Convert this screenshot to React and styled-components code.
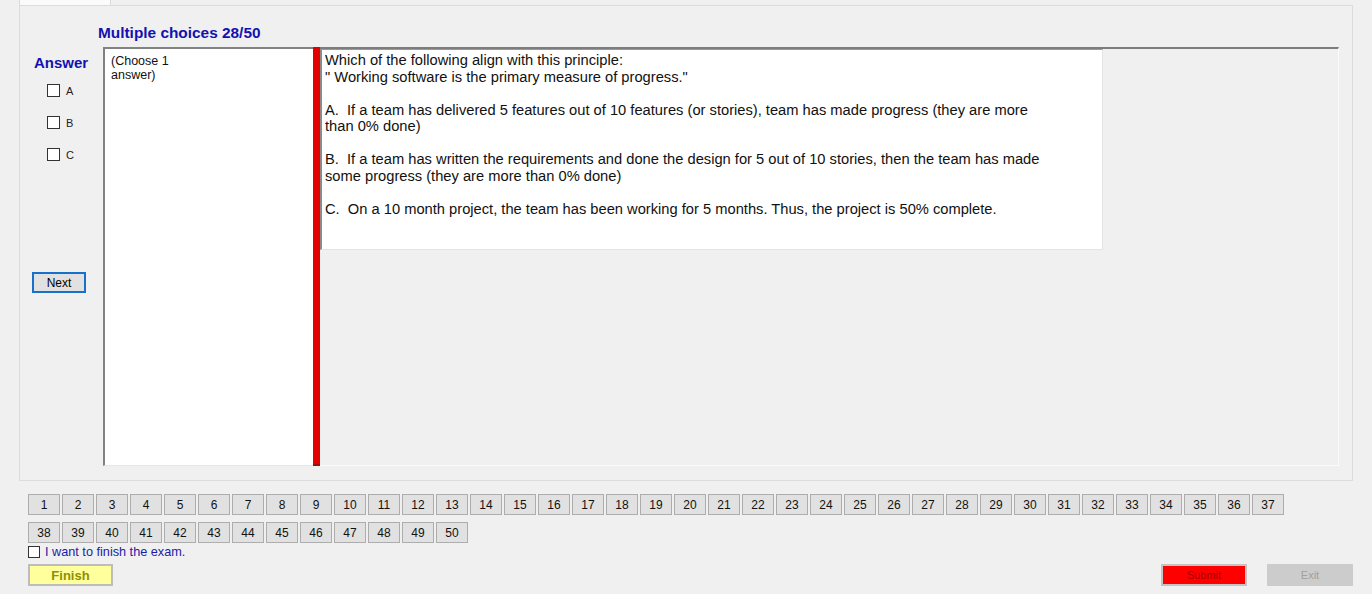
import React from 'react';
import styled, { createGlobalStyle } from 'styled-components';

const GlobalStyle = createGlobalStyle`
    html, body {
        margin: 0;
        padding: 0;
        background: #f0f0f0;
    }
    body {
        font-family: "Liberation Sans", Arial, sans-serif;
        color: #000;
    }
    * { box-sizing: border-box; }
`;

const Window = styled.div`
    width: 1372px;
    height: 594px;
    background: #f0f0f0;
    overflow: hidden;
`;

const TabStrip = styled.div`
    height: 5px;
    display: flex;
`;

const Tab = styled.div`
    margin-left: 19px;
    width: 92px;
    height: 5px;
    background: #fbfbfb;
    border-left: 1px solid #dadada;
    border-right: 1px solid #dadada;
`;

const TabPage = styled.div`
    margin-left: 19px;
    width: 1334px;
    height: 476px;
    border: 1px solid #dcdcdc;
    display: flex;
    flex-direction: column;
`;

const Title = styled.div`
    margin-top: 18px;
    padding-left: 78px;
    font-size: 15.4px;
    line-height: 17px;
    font-weight: bold;
    color: #1212b0;
`;

const Body = styled.div`
    margin-top: 6px;
    width: 1319px;
    height: 419px;
    display: flex;
`;

const AnswerCol = styled.div`
    width: 83px;
    padding-top: 8px;
    display: flex;
    flex-direction: column;
`;

const AnswerTitle = styled.div`
    padding-left: 14px;
    font-size: 15px;
    line-height: 16px;
    font-weight: bold;
    color: #1212b0;
`;

const OptionList = styled.div`
    margin-top: 13px;
    padding-left: 27px;
    display: flex;
    flex-direction: column;
    gap: 19px;
`;

const Option = styled.label`
    display: flex;
    align-items: center;
    gap: 6px;
    height: 13px;
    font-size: 11px;
    color: #222;
`;

const Box = styled.span`
    display: inline-block;
    width: ${p => p.size || 13}px;
    height: ${p => p.size || 13}px;
    background: #fff;
    border: 1px solid #333;
    flex: none;
`;

const NextButton = styled.button`
    margin-top: 111px;
    margin-left: 12px;
    width: 54px;
    height: 21px;
    padding: 0;
    background: #e1e1e1;
    border: 2px solid #1670cc;
    font-family: inherit;
    font-size: 12px;
    color: #000;
`;

const ListBox = styled.div`
    width: 210px;
    height: 100%;
    background: #fff;
    border-top: 2px solid #828282;
    border-left: 2px solid #828282;
    border-bottom: 1px solid #e6e6e6;
    padding: 5px 0 0 6px;
    font-size: 12.5px;
    line-height: 14px;
    color: #111;
`;

const Splitter = styled.div`
    width: 7px;
    height: 100%;
    background: #e30000;
    border-bottom: 2px solid #9a1010;
`;

const RightPanel = styled.div`
    flex: 1;
    height: 100%;
    border-top: 2px solid #7c7c7c;
    border-right: 1px solid #fbfbfb;
    border-bottom: 1px solid #fbfbfb;
`;

const QuestionBox = styled.div`
    width: 783px;
    height: 201px;
    background: #fff;
    border-left: 2px solid #8a8a8a;
    border-top: 1px solid #9a9a9a;
    border-right: 1px solid #e4e4e4;
    border-bottom: 1px solid #e4e4e4;
    padding: 2px 0 0 3px;
    font-size: 14.7px;
    line-height: 16.5px;
    color: #111;
    white-space: pre;
`;

const Para = styled.p`
    margin: 0 0 16.5px 0;
`;

const NavGrid = styled.div`
    margin-top: 13px;
    margin-left: 28px;
    width: 1260px;
    display: flex;
    flex-wrap: wrap;
    gap: 7px 2px;
`;

const NavButton = styled.button`
    width: 32px;
    height: 21px;
    padding: 0;
    background: #e1e1e1;
    border: 1px solid #adadad;
    font-family: inherit;
    font-size: 12px;
    color: #111;
`;

const FinishCheck = styled.label`
    margin-top: 2px;
    margin-left: 28px;
    height: 14px;
    display: flex;
    align-items: center;
    gap: 5px;
    font-size: 12.7px;
    color: #1c1ca8;
`;

const Footer = styled.div`
    margin-top: 5px;
    padding: 0 19px 0 28px;
    display: flex;
    justify-content: space-between;
`;

const ActionGroup = styled.div`
    display: flex;
    gap: 20px;
`;

const ActionButton = styled.button`
    width: ${p => p.w}px;
    height: 22px;
    padding: 0;
    background: ${p => p.bg};
    border: ${p => p.bd};
    font-family: inherit;
    font-size: ${p => p.fs}px;
    font-weight: ${p => (p.bold ? 'bold' : 'normal')};
    color: ${p => p.fg};
`;

const numbers = Array.from({ length: 50 }, (_, i) => i + 1);

export default function App() {
    return (
        <Window>
            <GlobalStyle />
            <TabStrip><Tab /></TabStrip>
            <TabPage>
                <Title>Multiple choices 28/50</Title>
                <Body>
                    <AnswerCol>
                        <AnswerTitle>Answer</AnswerTitle>
                        <OptionList>
                            {['A', 'B', 'C'].map(l => (
                                <Option key={l}><Box />{l}</Option>
                            ))}
                        </OptionList>
                        <NextButton>Next</NextButton>
                    </AnswerCol>
                    <ListBox>(Choose 1<br />answer)</ListBox>
                    <Splitter />
                    <RightPanel>
                        <QuestionBox>
                            <Para>
                                Which of the following align with this principle:{'\n'}
                                " Working software is the primary measure of progress."
                            </Para>
                            <Para>
                                {'A.  If a team has delivered 5 features out of 10 features (or stories), team has made progress (they are more\nthan 0% done)'}
                            </Para>
                            <Para>
                                {'B.  If a team has written the requirements and done the design for 5 out of 10 stories, then the team has made\nsome progress (they are more than 0% done)'}
                            </Para>
                            <Para>
                                {'C.  On a 10 month project, the team has been working for 5 months. Thus, the project is 50% complete.'}
                            </Para>
                        </QuestionBox>
                    </RightPanel>
                </Body>
            </TabPage>
            <NavGrid>
                {numbers.map(n => <NavButton key={n}>{n}</NavButton>)}
            </NavGrid>
            <FinishCheck><Box size={12} />I want to finish the exam.</FinishCheck>
            <Footer>
                <ActionButton w={85} bg="#ffff9c" bd="2px solid #bdbdbd" fs={13} bold fg="#8f8f00">Finish</ActionButton>
                <ActionGroup>
                    <ActionButton w={86} bg="#ff0000" bd="2px solid #c4c4c4" fs={11} fg="#a00000">Submit</ActionButton>
                    <ActionButton w={86} bg="#cccccc" bd="1px solid #cccccc" fs={11} fg="#a0a0a0">Exit</ActionButton>
                </ActionGroup>
            </Footer>
        </Window>
    );
}
